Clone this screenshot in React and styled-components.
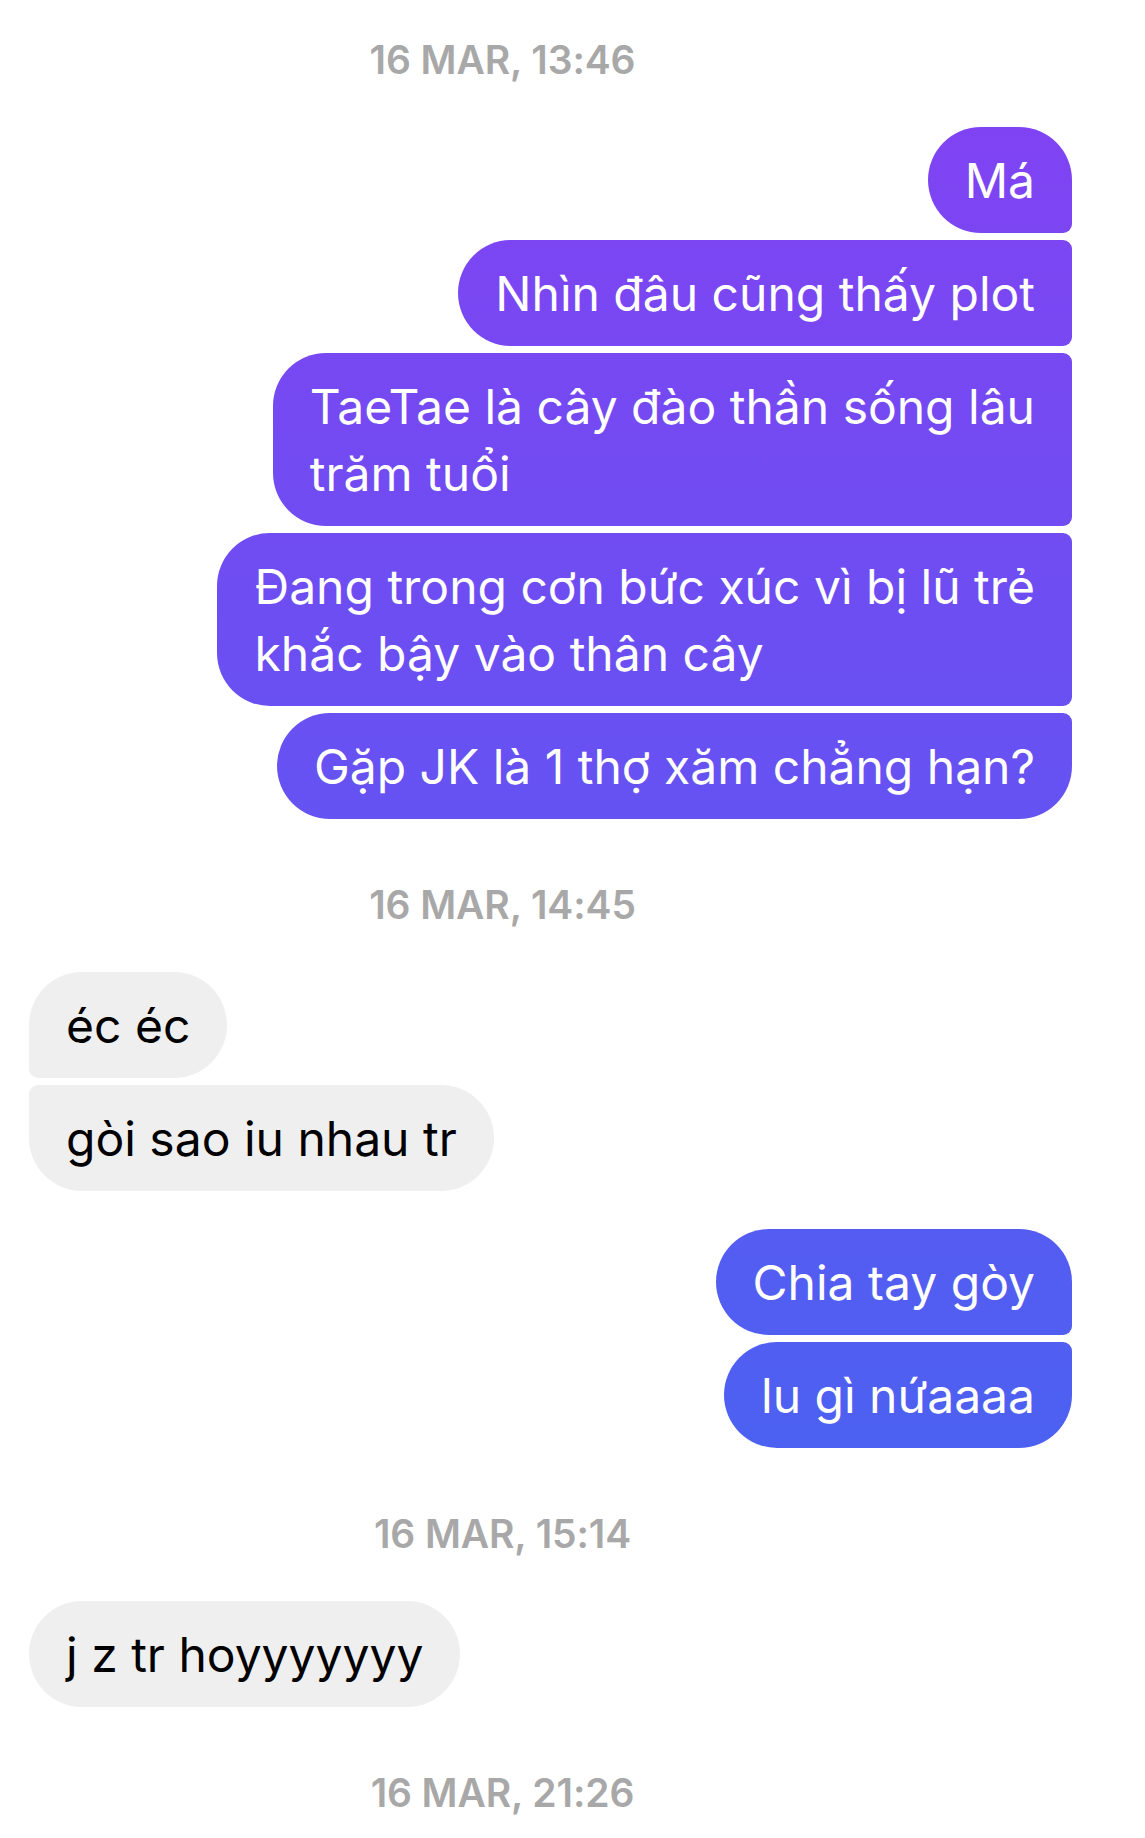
import React from "react";
import styled, { createGlobalStyle, css } from "styled-components";

const Global = createGlobalStyle`
  html, body { margin: 0; padding: 0; background: #ffffff; }
  body { font-family: Inter, "Noto Sans", "DejaVu Sans", sans-serif; }
`;

const Thread = styled.div`
  display: flex;
  flex-direction: column;
  padding: 35px 73px 0 29px;
  width: 1145px;
  box-sizing: border-box;
`;

const Stamp = styled.div`
  height: 50px;
  line-height: 50px;
  font-size: 39px;
  font-weight: 600;
  color: #a8a8a8;
  text-align: center;
  padding-right: 96px;
  margin: ${(p) => (p.$first ? "0" : "61px")} 0 42px;
  letter-spacing: -0.1px;
`;

const Group = styled.div`
  display: flex;
  flex-direction: column;
  align-items: ${(p) => (p.$mine ? "flex-end" : "flex-start")};
  gap: 7px;
  & + & { margin-top: 38px; }
`;

const BIG = 53;
const SMALL = 9;

const Bubble = styled.div`
  box-sizing: border-box;
  padding: 20px 37px 19px;
  font-size: 48px;
  line-height: 67px;
  white-space: nowrap;
  ${(p) =>
    p.$mine
      ? css`
          color: #ffffff;
          background-image: linear-gradient(
            to bottom,
            #8143f3 0px,
            #8043f3 127px,
            #4c61f1 1450px,
            #4c61f1 1838px
          );
          background-attachment: fixed;
          border-radius: ${BIG}px ${p.$pos === "first" || p.$pos === "single" ? BIG : SMALL}px
            ${p.$pos === "last" || p.$pos === "single" ? BIG : SMALL}px ${BIG}px;
        `
      : css`
          color: #000000;
          background: #efefef;
          border-radius: ${p.$pos === "first" || p.$pos === "single" ? BIG : SMALL}px ${BIG}px
            ${BIG}px ${p.$pos === "last" || p.$pos === "single" ? BIG : SMALL}px;
        `}
`;

const blocks = [
  { stamp: "16 MAR, 13:46" },
  {
    mine: true,
    msgs: [
      ["Má"],
      ["Nhìn đâu cũng thấy plot"],
      ["TaeTae là cây đào thần sống lâu", "trăm tuổi"],
      ["Đang trong cơn bức xúc vì bị lũ trẻ", "khắc bậy vào thân cây"],
      ["Gặp JK là 1 thợ xăm chẳng hạn?"],
    ],
  },
  { stamp: "16 MAR, 14:45" },
  { mine: false, msgs: [["éc éc"], ["gòi sao iu nhau tr"]] },
  { mine: true, msgs: [["Chia tay gòy"], ["lu gì nứaaaa"]] },
  { stamp: "16 MAR, 15:14" },
  { mine: false, msgs: [["j z tr hoyyyyyyy"]] },
  { stamp: "16 MAR, 21:26" },
];

function posOf(i, n) {
  if (n === 1) return "single";
  if (i === 0) return "first";
  if (i === n - 1) return "last";
  return "middle";
}

export default function App() {
  return (
    <>
      <Global />
      <Thread>
        {blocks.map((b, bi) =>
          b.stamp ? (
            <Stamp key={bi} $first={bi === 0}>
              {b.stamp}
            </Stamp>
          ) : (
            <Group key={bi} $mine={b.mine}>
              {b.msgs.map((lines, i) => (
                <Bubble key={i} $mine={b.mine} $pos={posOf(i, b.msgs.length)}>
                  {lines.map((l, li) => (
                    <React.Fragment key={li}>
                      {li > 0 && <br />}
                      {l}
                    </React.Fragment>
                  ))}
                </Bubble>
              ))}
            </Group>
          )
        )}
      </Thread>
    </>
  );
}
